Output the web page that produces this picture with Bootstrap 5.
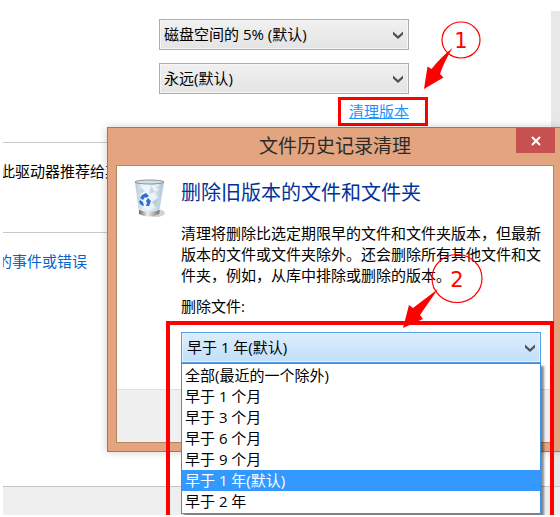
<!DOCTYPE html>
<html lang="zh-CN">
<head>
<meta charset="utf-8">
<meta name="viewport" content="width=device-width, initial-scale=1">
<title>文件历史记录清理</title>
<link href="https://cdn.jsdelivr.net/npm/bootstrap@5.3.0/dist/css/bootstrap.min.css" rel="stylesheet">
<style>
  body {
    font-family: "Open Sans", "Noto Sans CJK SC", sans-serif;
    font-size: 15px;
    line-height: 21px;
    color: #000;
    background: #fff;
    padding: 11px 0 2px 3px;
  }
  .desk { min-height: calc(100vh - 13px); }
  .scroll-track { width: 9px; background: #e8e8e8; }
  .settings { padding: 8px 0 0 156px; }
  .settings-fields { width: 250px; gap: 13px; }
  .combo {
    --bs-form-select-bg-img: url("data:image/svg+xml,%3Csvg xmlns='http://www.w3.org/2000/svg' viewBox='0 0 10 8'%3E%3Cpath d='M0 0.5 5 5 10 0.5V3.5L5 8 0 3.5z' fill='%23505050'/%3E%3C/svg%3E");
    height: 31px;
    padding: 0 24px 0 4px;
    font-size: 15px;
    line-height: 21px;
    color: #000;
    border: 1px solid #acacac;
    border-radius: 0;
    background-color: #e9e9e9;
    background-image: var(--bs-form-select-bg-img), linear-gradient(#f0f0f0, #e4e4e4);
    background-position: right 5px center, 0 0;
    background-size: 10px 8px, 100% 100%;
    box-shadow: inset 0 0 0 1px #f6f6f6;
  }
  .combo-open {
    padding-left: 5px;
    border-color: #569de5;
    background-image: var(--bs-form-select-bg-img), linear-gradient(#dcedfc, #c2dffa);
    box-shadow: inset 0 0 0 1px #e6f2fd;
  }
  .marked-link { margin: 3px 0 0 179px; width: 90px; height: 29px; border: 3px solid #f00; padding-left: 8px; line-height: 23px; }
  .marked-link a { color: #1e90ff; }
  .pane { border-top: 1px solid #c8c8c8; height: 90px; padding-top: 18px; margin-top: 16px; }
  .pane + .pane { margin-top: 0; height: 254px; }
  .pane-note { margin-left: -3px; }
  .pane-link { margin-left: -6px; color: #0066cc; }
  .foot-strip { background: #efefef; border-top: 1px solid #c4c4c4; }

  .dialog {
    left: 104px; right: 0; top: 116px;
    background: #e2a580;
    border: 1px solid #a3775a;
    border-right: 0;
    padding: 0 6px 8px 8px;
    box-shadow: 0 0 8px rgba(0, 0, 0, .2);
  }
  .dialog-title { font-size: 19px; line-height: 37px; margin: 0; color: #2b2b2b; font-weight: 400; }
  .dialog-close { top: 0; right: 5px; width: 39px; height: 25px; background: #c75050; }
  .dialog-inner { background: #fff; border: 1px solid #b98360; }
  .dialog-main { padding: 13px 12px 26px 17px; gap: 13px; }
  .dialog-heading { font-size: 20px; line-height: 28px; color: #003399; margin: 0 0 16px; font-weight: 400; }
  .dialog-foot { height: 53px; background: #f0f0f0; border-top: 1px solid #dfdfdf; }
  .field-name { margin: 10px 0 15px; }
  .drop-menu { top: 31px; left: 0; right: 0; z-index: 2; border: 1px solid #3c8ede; background: #fff; padding: 1px 0; box-shadow: 3px 3px 2px rgba(0, 0, 0, .45); }
  .drop-menu .list-group-item { border: 0; border-radius: 0; padding: 0 3px; color: #000; background: #fff; }
  .drop-menu .list-group-item.active { color: #fff; background: #3399ff; margin: 0; }
  .red-frame { left: 163px; right: 6px; top: 310px; bottom: 0; z-index: 1; border: 4px solid #f00; border-bottom: 0; pointer-events: none; }
  .callout { z-index: 3; pointer-events: none; }
  .callout-one { left: 420px; top: 10px; }
  .callout-two { left: 396px; top: 240px; }
  .callout text { font: 21px "DejaVu Sans", sans-serif; fill: #f00; text-anchor: middle; }
</style>
</head>
<body>
<main class="desk position-relative overflow-hidden d-flex flex-column">
  <div class="d-flex">
    <div class="flex-grow-1">
      <section class="settings">
        <div class="settings-fields d-flex flex-column">
          <select class="form-select combo" aria-label="脱机缓存大小"><option>磁盘空间的 5% (默认)</option></select>
          <select class="form-select combo" aria-label="保留已保存的版本"><option>永远(默认)</option></select>
        </div>
        <div class="marked-link"><a href="#">清理版本</a></div>
      </section>
      <section class="pane"><p class="pane-note mb-0">此驱动器推荐给其</p></section>
      <section class="pane"><a class="pane-link text-decoration-none" href="#">的事件或错误</a></section>
    </div>
    <div class="scroll-track"></div>
  </div>
  <div class="foot-strip flex-grow-1"></div>

  <section class="dialog position-absolute" role="dialog" aria-labelledby="dialogTitle">
    <h1 class="dialog-title text-center" id="dialogTitle">文件历史记录清理</h1>
    <button type="button" class="dialog-close btn rounded-0 border-0 p-0 position-absolute d-flex align-items-center justify-content-center" aria-label="关闭">
      <svg width="10" height="10" viewBox="0 0 10 10"><path d="M1 1 9 9M9 1 1 9" stroke="#fff" stroke-width="2"/></svg>
    </button>
    <div class="dialog-inner">
      <div class="dialog-main d-flex align-items-start">
        <svg class="flex-shrink-0" width="34" height="40" viewBox="0 0 34 40" aria-hidden="true">
          <defs>
            <linearGradient id="glass"><stop offset="0" stop-color="#b8c9d8"/><stop offset=".3" stop-color="#e5eef6"/><stop offset=".7" stop-color="#cfdeea"/><stop offset="1" stop-color="#b4c3cf"/></linearGradient>
            <linearGradient id="metal"><stop offset="0" stop-color="#66696c"/><stop offset=".4" stop-color="#eeeeee"/><stop offset="1" stop-color="#6f7274"/></linearGradient>
          </defs>
          <ellipse cx="22" cy="34" rx="9" ry="4" fill="#d3d3d3"/>
          <path d="M1 3 5 34Q15 40 25 34L30 3Z" fill="url(#glass)"/>
          <path d="M6 5 12 3 17 7 24 4 27 10 21 13 24 19 18 23 21 29 13 32 9 27 6 17 9 11Z" fill="#f3f8fc" opacity=".75"/>
          <path d="M17 7 21 13 15 15ZM24 19 18 23 23 28ZM7 9 11 12 6 15ZM22 8 28 6 26 12Z" fill="#afc4d7" opacity=".6"/>
          <path d="M5 31Q15 35 26 31L25 35Q15 40 5 35Z" fill="url(#metal)"/>
          <ellipse cx="15.500" cy="3" rx="14.500" ry="2" fill="#d3dee6" stroke="#8b9399"/>
          <path d="M8 16 12 14 15 17 12 19 11 18 9 21 6 19ZM14 19 17 22 15 27 12 27 13 24 12 22ZM6 21 9 23 10 27 7 26 5 23Z" fill="#2f6fd6"/>
        </svg>
        <div class="flex-grow-1">
          <h2 class="dialog-heading">删除旧版本的文件和文件夹</h2>
          <p class="mb-0">清理将删除比选定期限早的文件和文件夹版本，但最新版本的文件或文件夹除外。还会删除所有其他文件和文件夹，例如，从库中排除或删除的版本。</p>
          <label class="field-name d-block" for="olderThan">删除文件:</label>
          <div class="position-relative">
            <select class="form-select combo combo-open" id="olderThan"><option>早于 1 年(默认)</option></select>
            <div class="drop-menu list-group rounded-0 position-absolute">
              <button type="button" class="list-group-item list-group-item-action">全部(最近的一个除外)</button>
              <button type="button" class="list-group-item list-group-item-action">早于 1 个月</button>
              <button type="button" class="list-group-item list-group-item-action">早于 3 个月</button>
              <button type="button" class="list-group-item list-group-item-action">早于 6 个月</button>
              <button type="button" class="list-group-item list-group-item-action">早于 9 个月</button>
              <button type="button" class="list-group-item list-group-item-action active">早于 1 年(默认)</button>
              <button type="button" class="list-group-item list-group-item-action">早于 2 年</button>
            </div>
          </div>
        </div>
      </div>
      <div class="dialog-foot"></div>
    </div>
  </section>

  <div class="red-frame position-absolute"></div>
  <svg class="callout callout-one position-absolute" width="62" height="72" viewBox="0 0 62 72">
    <ellipse cx="38" cy="19" rx="19" ry="18" fill="none" stroke="#f00" stroke-width="1.200"/>
    <path d="M29.500 27Q18 36 8.500 48L4.500 45.500 1 68 20.500 56.500 17 53Q21 41 29.500 27Z" fill="#f00"/>
    <text x="38" y="27">1</text>
  </svg>
  <svg class="callout callout-two position-absolute" width="90" height="80" viewBox="0 0 90 80">
    <ellipse cx="58" cy="27.500" rx="25" ry="24" fill="none" stroke="#f00" stroke-width="1.200"/>
    <path d="M39 38 14 57 10 54 4 77 24 68 21 64Z" fill="#f00"/>
    <text x="58" y="36">2</text>
  </svg>
</main>
<script src="https://cdn.jsdelivr.net/npm/bootstrap@5.3.0/dist/js/bootstrap.bundle.min.js"></script>
</body>
</html>
